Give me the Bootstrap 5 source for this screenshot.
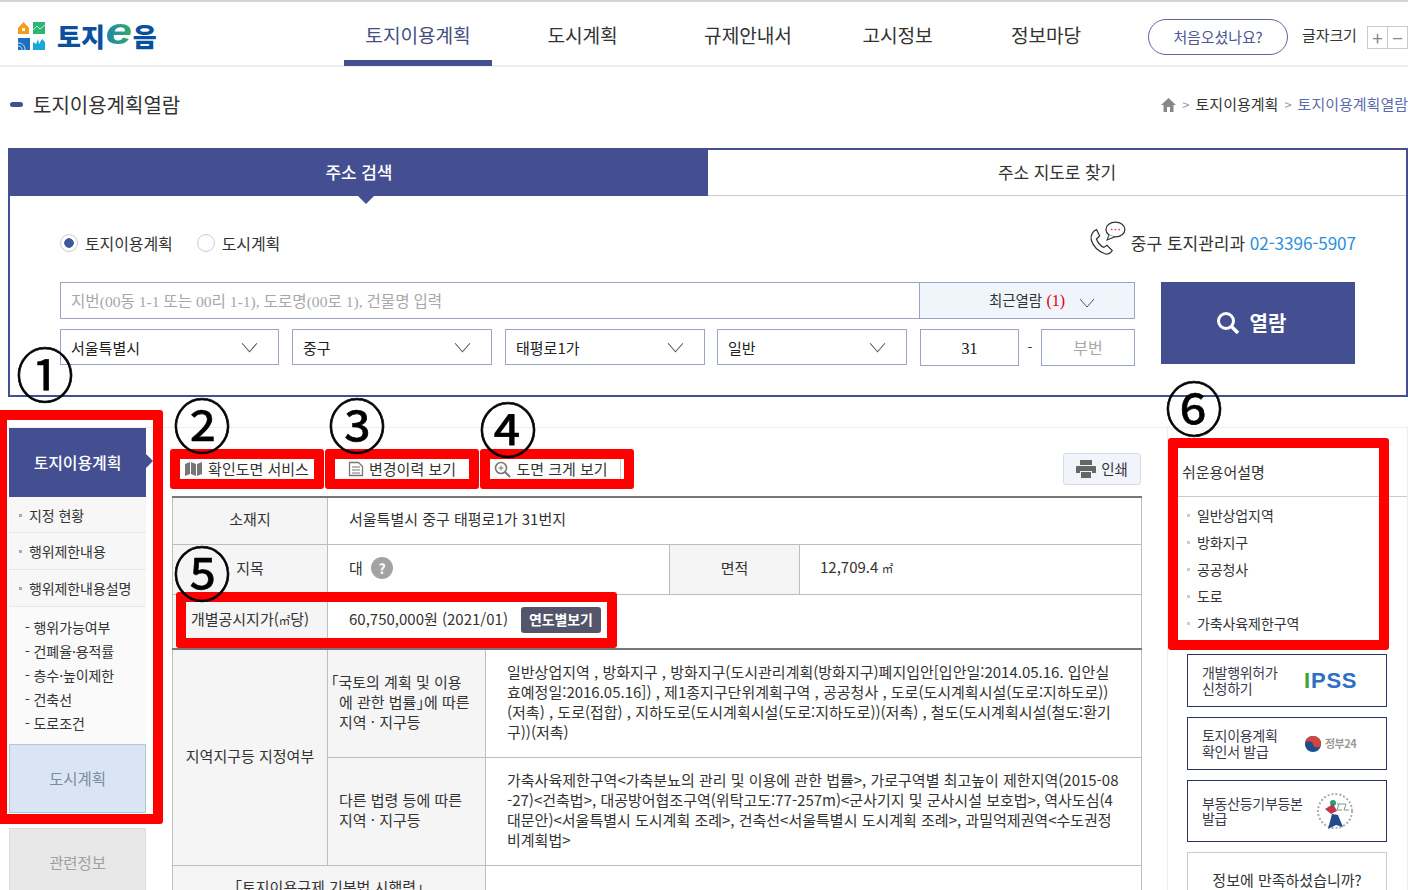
<!DOCTYPE html>
<html lang="ko"><head><meta charset="utf-8"><title>토지이음</title>
<link rel="stylesheet" href="https://cdn.jsdelivr.net/npm/bootstrap@5.3.0/dist/css/bootstrap.min.css">
<style>
html,body{height:890px;overflow:hidden}
body{font-family:"Noto Sans CJK KR","Noto Sans",sans-serif;color:#333;font-size:14px;background:#fff;position:relative;letter-spacing:-.1px}
.topbar{height:67px;border-top:2px solid #d4d4d4;border-bottom:2px solid #eee;padding-left:17px}
.logo-wrap{margin-top:5px;width:138px;flex:none}
.logo-wrap svg{flex:none}
.logo-txt{font-size:26px;font-weight:900;color:#0b4f9f;letter-spacing:0;margin-left:10px;line-height:1;white-space:nowrap;flex:none}
.logo-e{display:inline-block;flex:none;font-style:italic;font-size:37px;line-height:26px;height:26px;width:28px;text-align:center;font-family:"Liberation Sans",sans-serif;font-weight:700;transform:scaleX(1.3) translateY(-4px);background:linear-gradient(90deg,#1b7fb8,#35b35a);-webkit-background-clip:text;background-clip:text;color:transparent}
.mainnav{margin-left:189px;height:65px}
.mainnav a{display:block;height:65px;line-height:69px;font-size:19.2px;color:#333;text-decoration:none;text-align:center;border-bottom:6px solid transparent;padding:0;white-space:nowrap}
.mainnav a.on{color:#45507f;border-color:#444f92;margin-bottom:-2px}
.mi1{width:148px}.mi2{width:181px}.mi3{width:150px}.mi4{width:149px}.mi5{width:148px}
.firstbtn{margin-left:28px;margin-top:6px;width:140px;height:36px;border:1px solid #5c64a8;border-radius:18px;color:#4d5797;text-align:center;line-height:34px;font-size:15px}
.fontsize{margin-left:14px;margin-top:6px;font-size:15px;white-space:nowrap}
.fsbox{display:inline-flex;border:1px solid #ccc;margin-left:10px;height:23px;vertical-align:middle;color:#888;line-height:21px;font-size:19px;width:41px}
.fsbox span{width:20px;text-align:center}.fsbox span+span{border-left:1px solid #ccc}
.titlerow{height:81px;padding:0 0 6px 10px}
.tbar{width:13px;height:5px;border-radius:3px;background:#444f92;margin-right:10px}
.pagetitle{font-size:20px;color:#333;margin:0;font-weight:400;letter-spacing:0}
.crumb{font-size:15px;white-space:nowrap;letter-spacing:0}.crumb b{font-weight:400;color:#5b6cae}.crumb i{font-style:normal;color:#999;margin:0 6px;font-size:13px}
.searchbox{margin-left:8px;height:249px;border:2px solid #444f92}
.tabon{width:698px;height:46px;background:#444f92;color:#fff;text-align:center;line-height:44px;font-size:17px;font-weight:500;position:relative}
.tabon::after{content:"";position:absolute;left:348px;top:46px;border:8px solid transparent;border-top-color:#444f92;border-bottom:0}
.taboff{flex:1;height:46px;border-bottom:1px solid #ccc;text-align:center;line-height:44px;font-size:17px}
.sform{padding:0 50px}
.radios{height:86px;padding-top:8px}
.radio-set{font-size:16px}
.form-check-input.rd{width:18px;height:18px;margin:0 7px 0 0;border:1px solid #ccc;float:none;box-shadow:none}
.form-check-input.rd:checked{background-color:#fff;border-color:#ccc;background-image:radial-gradient(circle,#3f5a9c 0 4.500px,transparent 5px)}
.phone{font-size:17px;white-space:nowrap;letter-spacing:0}.phone b{font-weight:400;color:#2f8fd8;font-size:17.200px;letter-spacing:-.1px}
.phone svg{margin-top:-8px;margin-right:4px}
.leftf{width:1075px}
.kw{height:37px;border:1px solid #9aa5c6}
.kw-in{flex:1;border:0;outline:0;padding:2px 10px 0;font-family:"Liberation Serif","Noto Sans CJK KR",serif;font-size:15.600px;min-width:0;background:transparent;border-right:1px solid #9aa5c6}
.kw-in::placeholder,.numin::placeholder{color:#a8a8a8;opacity:1}
.recent{width:214px;background:#f0f5fc;font-size:14.500px;line-height:35px;font-family:"Liberation Serif","Noto Sans CJK KR",serif;padding-left:69px;white-space:nowrap}
.recent em{font-style:normal;color:#e00000;font-size:16px;margin:0 14px 0 1px}
.selrow{margin-top:10px;height:37px}
.form-select.sl{height:36px;border:1px solid #9aa5c6;border-radius:0;font-size:15px;color:#222;padding:2px 10px 0;font-family:"Noto Sans CJK KR",sans-serif;background-image:url("data:image/svg+xml,%3Csvg xmlns='http://www.w3.org/2000/svg' viewBox='0 0 16 10'%3E%3Cpath d='M1 1l7 8 7-8' fill='none' stroke='%23556' stroke-width='1'/%3E%3C/svg%3E");background-size:17px 11px;background-position:right 20px center;box-shadow:none}
.s1{width:219px;margin-right:13px}.s2{width:200px;margin-right:13px}.s3{width:200px;margin-right:12px}.s4{width:190px;margin-right:13px}
.numin{height:37px;border:1px solid #9aa5c6;text-align:center;font-family:"Liberation Serif","Noto Sans CJK KR",serif;font-size:16px;outline:0;color:#111;padding:2px 0 0}
.n1{width:99px}.n2{width:94px}.dash{width:22px;text-align:center;align-self:center}
.gobtn{width:194px;height:82px;margin-left:26px;background:#444f92;border:0;border-radius:0;color:#fff;font-size:20px;font-weight:700;padding:0 14px 0 0}
.gobtn svg{margin-right:10px}
.bodyrow{margin-top:30px;border-top:1px solid #eee}
.sidenav{width:137px;margin-left:9px;flex:none}
.sn-top{height:69px;background:#444f92;color:#fff;font-size:16px;font-weight:500;text-align:center;line-height:68px;position:relative}
.sn-top::after{content:"";position:absolute;left:137px;top:26px;border:7px solid transparent;border-left-color:#444f92;border-right:0}
.sn-item{height:37px;line-height:37px;background:#f7f7f7;border-bottom:1px solid #e8e8e8;padding-left:20px;font-size:14px;position:relative;white-space:nowrap}
.sn-item::before{content:"";position:absolute;left:10px;top:17px;width:3px;height:3px;background:#aaa}
.sn-item.f{height:36px;line-height:36px}
.sn-sub{height:137px;background:#fafafa;padding:8px 0 0 16px;font-size:14px;line-height:24px}
.sn-sub div{white-space:nowrap}
.sn-city{height:69px;background:#d9e5f4;border:1px solid #b3c7e0;text-align:center;line-height:66px;font-size:15.500px;color:#7b8ba0}
.sn-rel{margin-top:15px;height:69px;background:#e8e8e8;border:1px solid #ddd;text-align:center;line-height:66px;font-size:15.500px;color:#a0a0a0}
.contentarea{width:969px;margin-left:26px;flex:none}
.toolbar{height:68px;padding-top:31px}
.tbtn{width:134px;height:20px;background:#fff;font-size:15px;line-height:20px;text-align:center;white-space:nowrap;color:#333;display:flex;align-items:center;justify-content:center;gap:5px;position:relative;letter-spacing:0}
.tbtn.a{margin-left:8px}
.tbtn.b{margin-left:21px}
.tbtn.c{margin-left:21px;padding-right:12px}
.tbtn.c::after{content:"";position:absolute;right:3px;top:0;bottom:0;width:1px;background:#ccc}
.printbtn{width:78px;height:32px;background:#f1f5fb;border:1px solid #d6dbe4;border-radius:3px;font-size:14.500px;padding:0;color:#333;margin-top:-6px;display:flex;align-items:center;justify-content:center;gap:5px}
.infotbl{width:969px;table-layout:fixed;border-collapse:collapse;border-top:2px solid #777;font-size:15px;line-height:20px;margin:0;letter-spacing:0}
.infotbl th,.infotbl td{border:1px solid #bdbdbd;padding:0 21px 3px;vertical-align:middle;font-weight:400;color:#333}
.infotbl th{background:#f5f5f5;text-align:center;padding:0 8px 3px}
.infotbl .thick>*{border-bottom:2px solid #777}
.infotbl th.lft{text-align:left;padding:0 0 3px 11px}
.infotbl th.toprow{vertical-align:top;padding-top:11px}
.infotbl td.txt{white-space:nowrap}
.infotbl td.area{padding-left:20px}
.sqm{font-size:11.500px}
.brL{margin-left:-8px}
.yearbtn{display:inline-block;background:#54556a;color:#fff;font-weight:700;font-size:14px;border-radius:3px;padding:0 8px;height:26px;line-height:25px;margin-left:13px;letter-spacing:-.1px}
.qm{display:inline-block;width:22px;height:22px;background:#a3a3a3;border-radius:50%;color:#fff;text-align:center;font-weight:700;line-height:22px;font-size:14px;margin-left:4px}
.rightcol{width:241px;margin-left:26px;flex:none;border:solid #eee;border-width:0 1px;height:462px}
.rt-head{height:69px;line-height:88px;padding-left:14px;border-bottom:1px solid #ccc;font-size:15px;letter-spacing:0}
.rt-list{padding:5px 0 0 19px;height:157px;font-size:14px;line-height:27px}
.rt-list div{position:relative;padding-left:10px;white-space:nowrap}
.rt-list div::before{content:"";position:absolute;left:0;top:12px;width:3px;height:3px;background:#ccc}
.lnk{display:flex;align-items:center;width:200px;height:53px;margin:0 0 10px 19px;border:1px solid #2b3163;padding-left:14px;font-size:14px;line-height:15.500px;color:#3a3a4a;letter-spacing:-.3px}
.lnk.tall{height:62px}
.lnktxt{width:102px;flex:none;white-space:nowrap}
.lnk.tall .lnktxt{width:104px}
.ipss{font-family:"Liberation Sans",sans-serif;font-weight:700;font-size:22px;letter-spacing:.8px;color:#2f6fc4;line-height:1}
.ipss span{color:#3aa63a}
.gov{font-size:11px;font-weight:700;color:#9a9a9a;white-space:nowrap;display:flex;align-items:center;gap:3px;letter-spacing:-.5px}
.court{margin-left:10px;line-height:0}
.satis{width:200px;height:60px;margin-left:19px;border:1px solid #ccc;text-align:center;padding-top:16px;font-size:15px;letter-spacing:0}
.annot{position:absolute;border:solid #f00;border-width:10px;border-radius:3px;pointer-events:none}
.numk{position:absolute;font-size:58px;line-height:1;width:58px;color:#000;font-family:"Noto Sans CJK KR",sans-serif;font-weight:400;letter-spacing:0;pointer-events:none;text-align:center;-webkit-text-stroke:.7px #000}
</style></head>
<body>
<header class="topbar d-flex align-items-center">
  <div class="logo-wrap d-flex align-items-center">
    <svg width="30" height="30" viewBox="0 0 30 30"><path d="M1 7l5.500-6 5.500 6v6H1z" fill="#f39b1a"/><rect x="5" y="7" width="3" height="3" fill="#fff"/><rect x="16" y="1" width="12" height="12" fill="#2bb673"/><path d="M16 9l4-4 3 3 5-4" fill="none" stroke="#bff0d6" stroke-width="1"/><rect x="1" y="17" width="12" height="12" fill="#1d6fc0"/><path d="M1 22c5 0 7 3 7 7M1 25c3 0 4 2 4 4" fill="none" stroke="#bfe0ff" stroke-width="1"/><path d="M16 29V21l3 2 2-5 1 5 3-5 3 3v8z" fill="#18a9d6"/></svg>
    <span class="logo-txt d-flex align-items-center"><span>토지</span><span class="logo-e">e</span><span>음</span></span>
  </div>
  <nav class="mainnav d-flex">
    <a href="#" class="mi1 on">토지이용계획</a><a href="#" class="mi2">도시계획</a><a href="#" class="mi3">규제안내서</a><a href="#" class="mi4">고시정보</a><a href="#" class="mi5">정보마당</a>
  </nav>
  <div class="firstbtn">처음오셨나요?</div>
  <div class="fontsize">글자크기<span class="fsbox"><span>+</span><span>−</span></span></div>
</header>
<div class="titlerow d-flex align-items-center justify-content-between">
  <div class="d-flex align-items-center"><span class="tbar"></span><h1 class="pagetitle">토지이용계획열람</h1></div>
  <div class="crumb d-flex align-items-center"><svg width="15" height="14" viewBox="0 0 15 14"><path d="M7.500 0L0 7h2.500v7h3.500V9h3v5h3.500V7H15z" fill="#888"/></svg><i>&gt;</i>토지이용계획<i>&gt;</i><b>토지이용계획열람</b></div>
</div>
<section class="searchbox">
  <div class="d-flex"><div class="tabon">주소 검색</div><div class="taboff">주소 지도로 찾기</div></div>
  <div class="sform">
    <div class="radios d-flex align-items-center justify-content-between">
      <div class="radio-set d-flex align-items-center">
        <input class="form-check-input rd" type="radio" name="p" checked aria-label="토지이용계획"><span class="me-4">토지이용계획</span>
        <input class="form-check-input rd" type="radio" name="p" aria-label="도시계획"><span>도시계획</span>
      </div>
      <div class="phone d-flex align-items-center">
        <svg width="40" height="36" viewBox="0 0 38 34"><path d="M9 8c-3 1-6 5-5 10 2 6 7 11 13 13 3 1 6-1 7-3l-5-5-3 2c-3-1-6-5-7-8l3-3z" fill="none" stroke="#333" stroke-width="1.200"/><ellipse cx="27" cy="8" rx="9" ry="7" fill="#fff" stroke="#333" stroke-width="1.200"/><path d="M21 13l-2 5 7-3" fill="#fff" stroke="#333" stroke-width="1"/><circle cx="23.500" cy="8" r=".8" fill="#d33"/><circle cx="27" cy="8" r=".8" fill="#d33"/><circle cx="30.500" cy="8" r=".8" fill="#d33"/></svg>
        <span>중구 토지관리과 <b>02-3396-5907</b></span>
      </div>
    </div>
    <div class="d-flex">
      <div class="leftf">
        <div class="kw d-flex"><input class="kw-in" type="text" placeholder="지번(00동 1-1 또는 00리 1-1), 도로명(00로 1), 건물명 입력" aria-label="주소"><div class="recent">최근열람 <em>(1)</em><svg width="16" height="10" viewBox="0 0 16 10"><path d="M1 1l7 8 7-8" fill="none" stroke="#556" stroke-width="1"/></svg></div></div>
        <div class="selrow d-flex align-items-start">
          <select class="form-select sl s1" aria-label="시도"><option>서울특별시</option></select>
          <select class="form-select sl s2" aria-label="시군구"><option>중구</option></select>
          <select class="form-select sl s3" aria-label="읍면동"><option>태평로1가</option></select>
          <select class="form-select sl s4" aria-label="구분"><option>일반</option></select>
          <input class="numin n1" value="31" aria-label="본번"><span class="dash">-</span><input class="numin n2" placeholder="부번" aria-label="부번">
        </div>
      </div>
      <button class="btn gobtn d-flex align-items-center justify-content-center" type="button"><svg width="24" height="24" viewBox="0 0 24 24"><circle cx="10" cy="10" r="7.500" fill="none" stroke="#fff" stroke-width="3"/><path d="M15.500 15.500L22 22" stroke="#fff" stroke-width="3.500"/></svg>열람</button>
    </div>
  </div>
</section>
<div class="bodyrow d-flex align-items-start">
  <aside class="sidenav">
    <div class="sn-top">토지이용계획</div>
    <div class="sn-item f">지정 현황</div>
    <div class="sn-item">행위제한내용</div>
    <div class="sn-item">행위제한내용설명</div>
    <div class="sn-sub"><div>- 행위가능여부</div><div>- 건폐율·용적률</div><div>- 층수·높이제한</div><div>- 건축선</div><div>- 도로조건</div></div>
    <div class="sn-city">도시계획</div>
    <div class="sn-rel">관련정보</div>
  </aside>
  <main class="contentarea">
    <div class="toolbar d-flex align-items-start">
      <div class="tbtn a"><svg width="18" height="14" viewBox="0 0 18 14"><path d="M0 2l5-2v12l-5 2zM6 0l5 2v12l-5-2zM12 2l5-2v12l-5 2z" fill="#777"/></svg>확인도면 서비스</div>
      <div class="tbtn b"><svg width="16" height="16" viewBox="0 0 16 16"><path d="M1.500 1.500h9l4 4v9h-13z" fill="none" stroke="#777" stroke-width="1.300"/><path d="M4 6h8M4 9h8M4 12h8" stroke="#777"/></svg>변경이력 보기</div>
      <div class="tbtn c"><svg width="17" height="17" viewBox="0 0 17 17"><circle cx="7" cy="7" r="5.500" fill="none" stroke="#777" stroke-width="1.600"/><path d="M11 11l5 5" stroke="#777" stroke-width="2"/><path d="M4.500 7h5M7 4.500v5" stroke="#777"/></svg>도면 크게 보기</div>
      <button class="printbtn ms-auto" type="button"><svg width="20" height="18" viewBox="0 0 20 18"><path d="M4 0h12v5H4zM1 6h18a1 1 0 0 1 1 1v6h-4v-2H4v2H0V7a1 1 0 0 1 1-1zM5 12h10v6H5z" fill="#666"/></svg>인쇄</button>
    </div>
    <table class="infotbl">
      <colgroup><col style="width:155px"><col style="width:158px"><col style="width:184px"><col style="width:130px"><col style="width:342px"></colgroup>
      <tr style="height:47px"><th>소재지</th><td colspan="4">서울특별시 중구 태평로1가 31번지</td></tr>
      <tr style="height:50px"><th>지목</th><td colspan="2">대 <span class="qm">?</span></td><th>면적</th><td class="area">12,709.4 <span class="sqm">㎡</span></td></tr>
      <tr style="height:55px" class="thick"><th>개별공시지가(<span class="sqm">㎡</span>당)</th><td colspan="4">60,750,000원 (2021/01)<span class="yearbtn">연도별보기</span></td></tr>
      <tr style="height:108px"><th rowspan="2">지역지구등 지정여부</th><th class="lft"><span class="brL">｢</span>국토의 계획 및 이용<br>에 관한 법률｣에 따른<br>지역 · 지구등</th><td colspan="3" class="txt">일반상업지역 , 방화지구 , 방화지구(도시관리계획(방화지구)폐지입안[입안일:2014.05.16. 입안실<br>효예정일:2016.05.16]) , 제1종지구단위계획구역 , 공공청사 , 도로(도시계획시설(도로:지하도로))<br>(저촉) , 도로(접합) , 지하도로(도시계획시설(도로:지하도로))(저촉) , 철도(도시계획시설(철도:환기<br>구))(저촉)</td></tr>
      <tr style="height:108px"><th class="lft">다른 법령 등에 따른<br>지역 · 지구등</th><td colspan="3" class="txt">가축사육제한구역&lt;가축분뇨의 관리 및 이용에 관한 법률&gt;, 가로구역별 최고높이 제한지역(2015-08<br>-27)&lt;건축법&gt;, 대공방어협조구역(위탁고도:77-257m)&lt;군사기지 및 군사시설 보호법&gt;, 역사도심(4<br>대문안)&lt;서울특별시 도시계획 조례&gt;, 건축선&lt;서울특별시 도시계획 조례&gt;, 과밀억제권역&lt;수도권정<br>비계획법&gt;</td></tr>
      <tr style="height:60px"><th colspan="2" class="toprow">「토지이용규제 기본법 시행령」</th><td colspan="3"></td></tr>
    </table>
  </main>
  <aside class="rightcol">
    <div class="rt-head">쉬운용어설명</div>
    <div class="rt-list"><div>일반상업지역</div><div>방화지구</div><div>공공청사</div><div>도로</div><div>가축사육제한구역</div></div>
    <a class="lnk text-decoration-none"><span class="lnktxt">개발행위허가<br>신청하기</span><span class="ipss"><span>I</span>PSS</span></a>
    <a class="lnk text-decoration-none"><span class="lnktxt">토지이용계획<br>확인서 발급</span><span class="gov"><svg width="18" height="18" viewBox="0 0 20 20"><circle cx="10" cy="10" r="9" fill="#1f4e8c"/><path d="M1 10a9 9 0 0 1 18 0c0 2-2 4-4.500 4S10 12 10 10s-2.500-3-4.500-3S1 8 1 10z" fill="#d4453c"/></svg>정부24</span></a>
    <a class="lnk tall text-decoration-none"><span class="lnktxt">부동산등기부등본<br>발급</span><span class="court"><svg width="38" height="38" viewBox="0 0 38 38"><circle cx="19" cy="19" r="17" fill="none" stroke="#aaa" stroke-width="2" stroke-dasharray="2 2"/><path d="M12 37l4-15 6 1 5 12-7-2z" fill="#234a8f"/><circle cx="17" cy="11" r="3" fill="#1fa27a"/><path d="M9 17l8-5 4 7-6 3z" fill="#c2344d"/><path d="M21 12h9M23 12l-2 6h5M30 12l-2 6h5" fill="none" stroke="#7a9a80"/></svg></span></a>
    <div class="satis">정보에 만족하셨습니까?</div>
  </aside>
</div>
<div class="annot" style="left:-3px;top:410px;width:166px;height:414px"></div>
<div class="annot" style="left:170px;top:449px;width:154px;height:40px"></div>
<div class="annot" style="left:325px;top:449px;width:154px;height:40px"></div>
<div class="annot" style="left:480px;top:449px;width:154px;height:40px"></div>
<div class="annot" style="left:176px;top:592px;width:441px;height:56px"></div>
<div class="annot" style="left:1168px;top:438px;width:221px;height:212px"></div>
<span class="numk" style="left:16px;top:343px">①</span>
<span class="numk" style="left:173px;top:394px">②</span>
<span class="numk" style="left:328px;top:394px">③</span>
<span class="numk" style="left:479px;top:398px">④</span>
<span class="numk" style="left:173px;top:542px">⑤</span>
<span class="numk" style="left:1165px;top:377px">⑥</span>
<script src="https://cdn.jsdelivr.net/npm/bootstrap@5.3.0/dist/js/bootstrap.bundle.min.js"></script>
</body></html>
